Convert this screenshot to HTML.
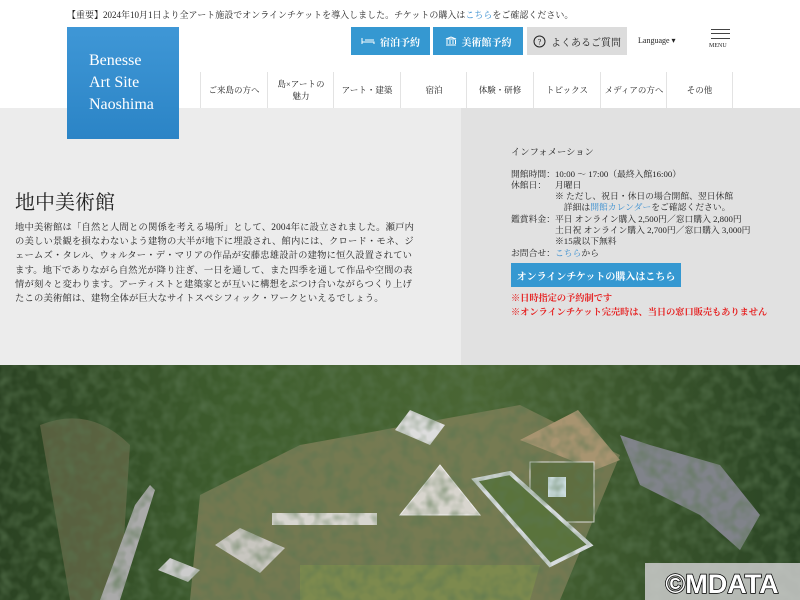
<!DOCTYPE html>
<html><head><meta charset="utf-8"><style>
*{margin:0;padding:0;box-sizing:border-box}
body{width:800px;height:600px;overflow:hidden;background:#fff;font-family:"Liberation Serif","Noto Serif CJK SC","Noto Sans CJK JP",serif;color:#222;position:relative}
.a{position:absolute}
.notice{left:67px;top:8px;font-size:9px;white-space:nowrap}
.link{color:#3a8fd0}
.logo{left:67px;top:27px;width:112px;height:112px;background:linear-gradient(180deg,#3f97d6,#2b84c6);color:#fff;font-size:16px;line-height:22px;padding:23px 0 0 22px;z-index:2}
.btn{top:27px;height:28px;color:#fff;background:#3598d1;font-size:10px;font-weight:bold;display:flex;align-items:center;justify-content:center;gap:5px}
.nav{top:72px;height:36px;width:67px;border-left:1px solid #e3e3e3;font-size:8.5px;display:flex;align-items:center;justify-content:center;text-align:center;line-height:12px}
.left{left:0;top:108px;width:461px;height:257px;background:#ececec}
.right{left:461px;top:108px;width:339px;height:257px;background:#e1e1e1}
h1{position:absolute;left:15px;top:186px;font-size:20px;font-weight:normal}
.body{left:15px;top:221px;width:440px;font-size:9.3px;line-height:14.2px;letter-spacing:0.2px;white-space:nowrap}
.info{left:511px;top:148px;font-size:9.3px;line-height:11.5px;white-space:nowrap}
.info table{border-collapse:collapse;font-size:8.8px;line-height:11.3px}
.info td{vertical-align:top;padding:0;white-space:nowrap}
.tb{left:511px;top:263px;width:170px;height:24px;background:#3598d1;color:#fff;font-size:10px;font-weight:bold;display:flex;align-items:center;justify-content:center}
.red{color:#e62020;font-size:9.2px;font-weight:bold;white-space:nowrap}
</style></head><body>
<div class="a notice">【重要】2024年10月1日より全アート施設でオンラインチケットを導入しました。チケットの購入は<span class="link">こちら</span>をご確認ください。</div>
<div class="a logo">Benesse<br>Art Site<br>Naoshima</div>
<div class="a btn" style="left:351px;width:79px"><svg width="14" height="8" viewBox="0 0 14 8"><path d="M1 1v6M1 5h12v2M4 3h9" stroke="#fff" fill="none"/></svg>宿泊予約</div>
<div class="a btn" style="left:433px;width:90px"><svg width="12" height="10" viewBox="0 0 12 10"><path d="M1 3L6 1l5 2zM2 4v4M5 4v4M8 4v4M10.5 4v4M1 9h10" stroke="#fff" fill="none"/></svg>美術館予約</div>
<div class="a btn" style="left:527px;width:100px;background:#dcdcdc;color:#222;font-weight:normal"><svg width="13" height="13"><circle cx="6.5" cy="6.5" r="5.5" stroke="#222" fill="none"/><text x="6.5" y="9.5" font-size="8" text-anchor="middle" fill="#222">?</text></svg>よくあるご質問</div>
<div class="a" style="left:638px;top:36px;font-size:8px">Language ▾</div>
<div class="a" style="left:711px;top:29px;width:19px;height:10px;border-top:1.5px solid #444;border-bottom:1.5px solid #444"><div style="margin-top:3px;border-top:1.5px solid #444"></div></div>
<div class="a" style="left:709px;top:43px;font-size:6px">MENU</div>
<div class="a nav" style="left:200px">ご来島の方へ</div>
<div class="a nav" style="left:267px">島×アートの<br>魅力</div>
<div class="a nav" style="left:333px">アート・建築</div>
<div class="a nav" style="left:400px">宿泊</div>
<div class="a nav" style="left:466px">体験・研修</div>
<div class="a nav" style="left:533px">トピックス</div>
<div class="a nav" style="left:600px">メディアの方へ</div>
<div class="a nav" style="left:666px;border-right:1px solid #e3e3e3">その他</div>
<div class="a left"></div><div class="a right"></div>
<h1>地中美術館</h1>
<div class="a body">地中美術館は「自然と人間との関係を考える場所」として、2004年に設立されました。瀬戸内<br>の美しい景観を損なわないよう建物の大半が地下に埋設され、館内には、クロード・モネ、ジ<br>ェームズ・タレル、ウォルター・デ・マリアの作品が安藤忠雄設計の建物に恒久設置されてい<br>ます。地下でありながら自然光が降り注ぎ、一日を通して、また四季を通して作品や空間の表<br>情が刻々と変わります。アーティストと建築家とが互いに構想をぶつけ合いながらつくり上げ<br>たこの美術館は、建物全体が巨大なサイトスペシフィック・ワークといえるでしょう。</div>
<div class="a info"><div style="margin-bottom:9px">インフォメーション</div>
<table>
<tr><td style="width:44px">開館時間：</td><td>10:00 ～ 17:00（最終入館16:00）</td></tr>
<tr><td>休館日：</td><td>月曜日</td></tr>
<tr><td></td><td>※ ただし、祝日・休日の場合開館、翌日休館<br>&nbsp;&nbsp;&nbsp;&nbsp;詳細は<span class="link">開館カレンダー</span>をご確認ください。</td></tr>
<tr><td>鑑賞料金：</td><td>平日 オンライン購入 2,500円／窓口購入 2,800円<br>土日祝 オンライン購入 2,700円／窓口購入 3,000円<br>※15歳以下無料</td></tr>
<tr><td>お問合せ：</td><td><span class="link">こちら</span>から</td></tr>
</table></div>
<div class="a tb">オンラインチケットの購入はこちら</div>
<div class="a red" style="left:511px;top:290px">※日時指定の予約制です</div>
<div class="a red" style="left:511px;top:304px">※オンラインチケット完売時は、当日の窓口販売もありません</div>
<svg class="a" style="left:0;top:365px" width="800" height="235" viewBox="0 0 800 235">
<defs><linearGradient id="g" x1="0" x2="1"><stop offset="0" stop-color="#2a4222"/><stop offset=".3" stop-color="#3f5e2e"/><stop offset=".6" stop-color="#4a6634"/><stop offset="1" stop-color="#2a4424"/></linearGradient>
<filter id="t"><feTurbulence type="fractalNoise" baseFrequency="0.08" numOctaves="2" seed="3"/><feColorMatrix values="0 0 0 0 0.1  0 0 0 0 0.18  0 0 0 0 0.08  0 0 0 1.2 -0.45"/></filter></defs>
<rect width="800" height="235" fill="url(#g)"/>
<path d="M40 60Q90 40 130 80L120 235H70Z" fill="#7a7456" opacity=".55"/>
<path d="M200 130L300 80 520 40 620 90 560 235H190Z" fill="#8a8560" opacity=".7"/>
<path d="M300 200L540 200 530 235 300 235Z" fill="#7d8a4e"/>
<path d="M100 235L135 140 150 120 155 125 120 235Z" fill="#aaa"/>
<path d="M620 70L650 80 720 100 760 150 740 185 700 150 640 120Z" fill="#80838a"/>
<path d="M520 75L578 45 620 95 595 105Z" fill="#a89470"/>
<rect x="530" y="97" width="64" height="60" fill="#5f6e40" stroke="#ddd"/>
<path d="M548 112h18v20h-18z" fill="#cfe0e4"/>
<path d="M395 65l15-20 35 15-15 20z" fill="#ddd"/>
<path d="M400 150L440 100 480 150Z" fill="#d8d5ce" stroke="#eee"/>
<path d="M475 115L510 108 590 180 550 200Z" fill="#5a733c" stroke="#d8dde0" stroke-width="4"/>
<rect x="272" y="148" width="105" height="12" fill="#d8d6d0"/>
<path d="M215 180l25-17 45 20-25 25z" fill="#c8c6c0"/>
<path d="M158 205l12-12 30 12-12 12z" fill="#ccc"/>
<rect width="800" height="235" filter="url(#t)"/>
<rect x="645" y="198" width="155" height="37" fill="#ccc" opacity=".85"/>
<text x="722" y="228" font-family="Liberation Sans,sans-serif" font-size="27" font-weight="bold" fill="#fff" stroke="#000" stroke-width="1.5" paint-order="stroke" text-anchor="middle">©MDATA</text>
</svg>
</body></html>
